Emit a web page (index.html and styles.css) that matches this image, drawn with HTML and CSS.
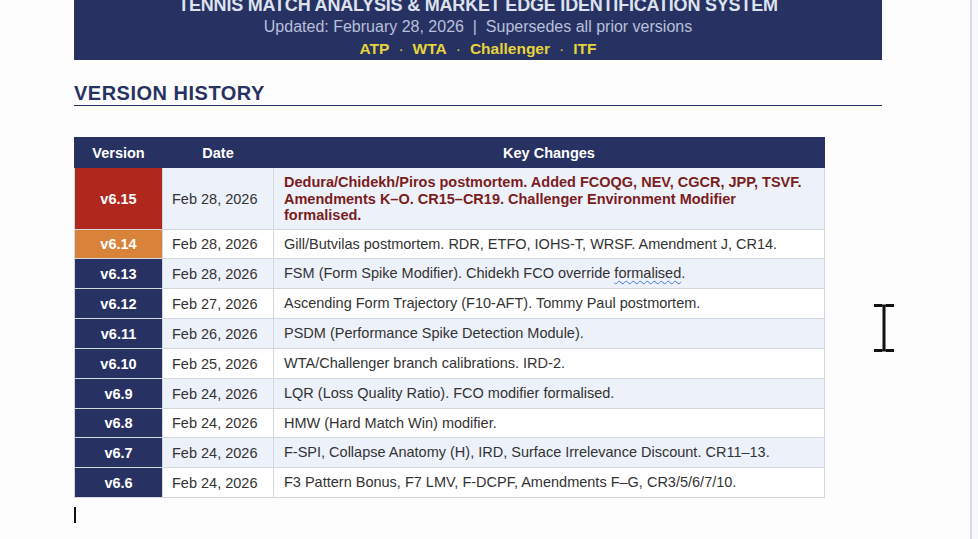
FILE: index.html
```html
<!DOCTYPE html>
<html>
<head>
<meta charset="utf-8">
<link rel="stylesheet" href="styles.css">
</head>
<body>
<div class="viewport">
  <main class="page">
    <header class="banner">
      <div class="title">TENNIS MATCH ANALYSIS &amp; MARKET EDGE IDENTIFICATION SYSTEM</div>
      <div class="sub">Updated: February 28, 2026 &nbsp;|&nbsp; Supersedes all prior versions</div>
      <div class="tours">ATP<span class="dot">·</span>WTA<span class="dot">·</span>Challenger<span class="dot">·</span>ITF</div>
    </header>

    <h2 class="section">VERSION HISTORY</h2>

    <table class="vh">
      <thead>
        <tr><th class="c-ver">Version</th><th class="c-date">Date</th><th>Key Changes</th></tr>
      </thead>
      <tbody>
        <tr class="alt"><td class="ver red">v6.15</td><td class="date">Feb 28, 2026</td><td class="chg strong">Dedura/Chidekh/Piros postmortem. Added FCOQG, NEV, CGCR, JPP, TSVF. Amendments K–O. CR15–CR19. Challenger Environment Modifier formalised.</td></tr>
        <tr class="short"><td class="ver orange">v6.14</td><td class="date">Feb 28, 2026</td><td class="chg">Gill/Butvilas postmortem. RDR, ETFO, IOHS-T, WRSF. Amendment J, CR14.</td></tr>
        <tr class="alt"><td class="ver">v6.13</td><td class="date">Feb 28, 2026</td><td class="chg">FSM (Form Spike Modifier). Chidekh FCO override <span class="spell">formalised</span>.</td></tr>
        <tr><td class="ver">v6.12</td><td class="date">Feb 27, 2026</td><td class="chg">Ascending Form Trajectory (F10-AFT). Tommy Paul postmortem.</td></tr>
        <tr class="alt"><td class="ver">v6.11</td><td class="date">Feb 26, 2026</td><td class="chg">PSDM (Performance Spike Detection Module).</td></tr>
        <tr><td class="ver">v6.10</td><td class="date">Feb 25, 2026</td><td class="chg">WTA/Challenger branch calibrations. IRD-2.</td></tr>
        <tr class="alt"><td class="ver">v6.9</td><td class="date">Feb 24, 2026</td><td class="chg">LQR (Loss Quality Ratio). FCO modifier formalised.</td></tr>
        <tr class="short"><td class="ver">v6.8</td><td class="date">Feb 24, 2026</td><td class="chg">HMW (Hard Match Win) modifier.</td></tr>
        <tr class="alt"><td class="ver">v6.7</td><td class="date">Feb 24, 2026</td><td class="chg">F-SPI, Collapse Anatomy (H), IRD, Surface Irrelevance Discount. CR11–13.</td></tr>
        <tr><td class="ver">v6.6</td><td class="date">Feb 24, 2026</td><td class="chg">F3 Pattern Bonus, F7 LMV, F-DCPF, Amendments F–G, CR3/5/6/7/10.</td></tr>
      </tbody>
    </table>
    <div class="caret"></div>
  </main>
  <div class="scroll"></div>
</div>
<svg class="ibeam" width="26" height="50" viewBox="0 0 26 50">
  <path d="M3 2.5 H11 M15 2.5 H23 M13 3 V47 M3 47.5 H11 M15 47.5 H23" stroke="#111" stroke-width="3" fill="none" stroke-linecap="butt"/>
  <path d="M10 2.5 H16 M10 47.5 H16" stroke="#111" stroke-width="2" fill="none"/>
</svg>
</body>
</html>
```

FILE: styles.css
```css
* { box-sizing: border-box; }
html, body { margin: 0; padding: 0; height: 100%; overflow: hidden; }
body {
  background: #fdfdfd;
  font-family: "Liberation Sans", Arial, sans-serif;
  color: #333;
}
.viewport {
  display: flex;
  height: 539px;
}
.page {
  width: 970px;
  padding-left: 74px;
  padding-right: 88px;
}
.scroll {
  width: 8px;
  border-left: 2px solid #d9dadd;
  background: #f7f8fb;
}
.banner {
  background: #283262;
  margin-top: -6px;
  height: 66px;
  text-align: center;
}
.title {
  color: #dde2ef;
  font-weight: bold;
  font-size: 18px;
  line-height: 22px;
  letter-spacing: -0.2px;
}
.sub {
  color: #b8c0da;
  font-size: 16px;
  line-height: 22px;
}
.tours {
  color: #e6d43c;
  font-weight: bold;
  font-size: 15.5px;
  line-height: 22px;
}
.dot {
  margin: 0 9px;
  font-weight: normal;
}
.section {
  margin: 20px 0 0;
  padding-top: 1px;
  padding-bottom: 0;
  color: #283262;
  font-size: 20px;
  font-weight: bold;
  line-height: 24px;
  border-bottom: 1.5px solid #283262;
  letter-spacing: 0.5px;
}
.vh {
  margin-top: 31px;
  width: 751px;
  border-collapse: collapse;
  font-size: 14.5px;
}
.vh th {
  background: #283262;
  color: #fff;
  font-weight: bold;
  height: 30px;
  padding: 0;
  border: 1px solid #283262;
}
.c-ver { width: 88px; }
.c-date { width: 111px; }
.vh td {
  border: 1px solid #d3d7de;
  height: 30px;
  padding: 0 10px;
  background: #fff;
  color: #333;
}
.vh tr.short td { height: 29px; }
.vh tr.alt td { background: #edf1f9; }
.vh td.ver {
  background: #283262;
  color: #fff;
  font-weight: bold;
  text-align: center;
  padding: 0;
}
.vh tr.alt td.ver { background: #283262; }
.vh tr td.ver.red { background: #b0271d; }
.vh tr td.ver.orange { background: #d9833a; }
.vh td.date { padding-left: 9px; }
.vh td.chg { padding-left: 10px; line-height: 16.5px; }
.vh td.strong {
  color: #7b1d1d;
  font-weight: bold;
  height: 62px;
  padding-top: 1px;
  padding-right: 16px;
}
.spell {
  text-decoration: underline wavy #4a76d6;
  text-decoration-thickness: 1px;
  text-underline-offset: 2px;
}
.caret {
  margin-top: 9px;
  width: 2px;
  height: 16px;
  background: #111;
}
.ibeam {
  position: absolute;
  left: 871px;
  top: 303px;
}
```
